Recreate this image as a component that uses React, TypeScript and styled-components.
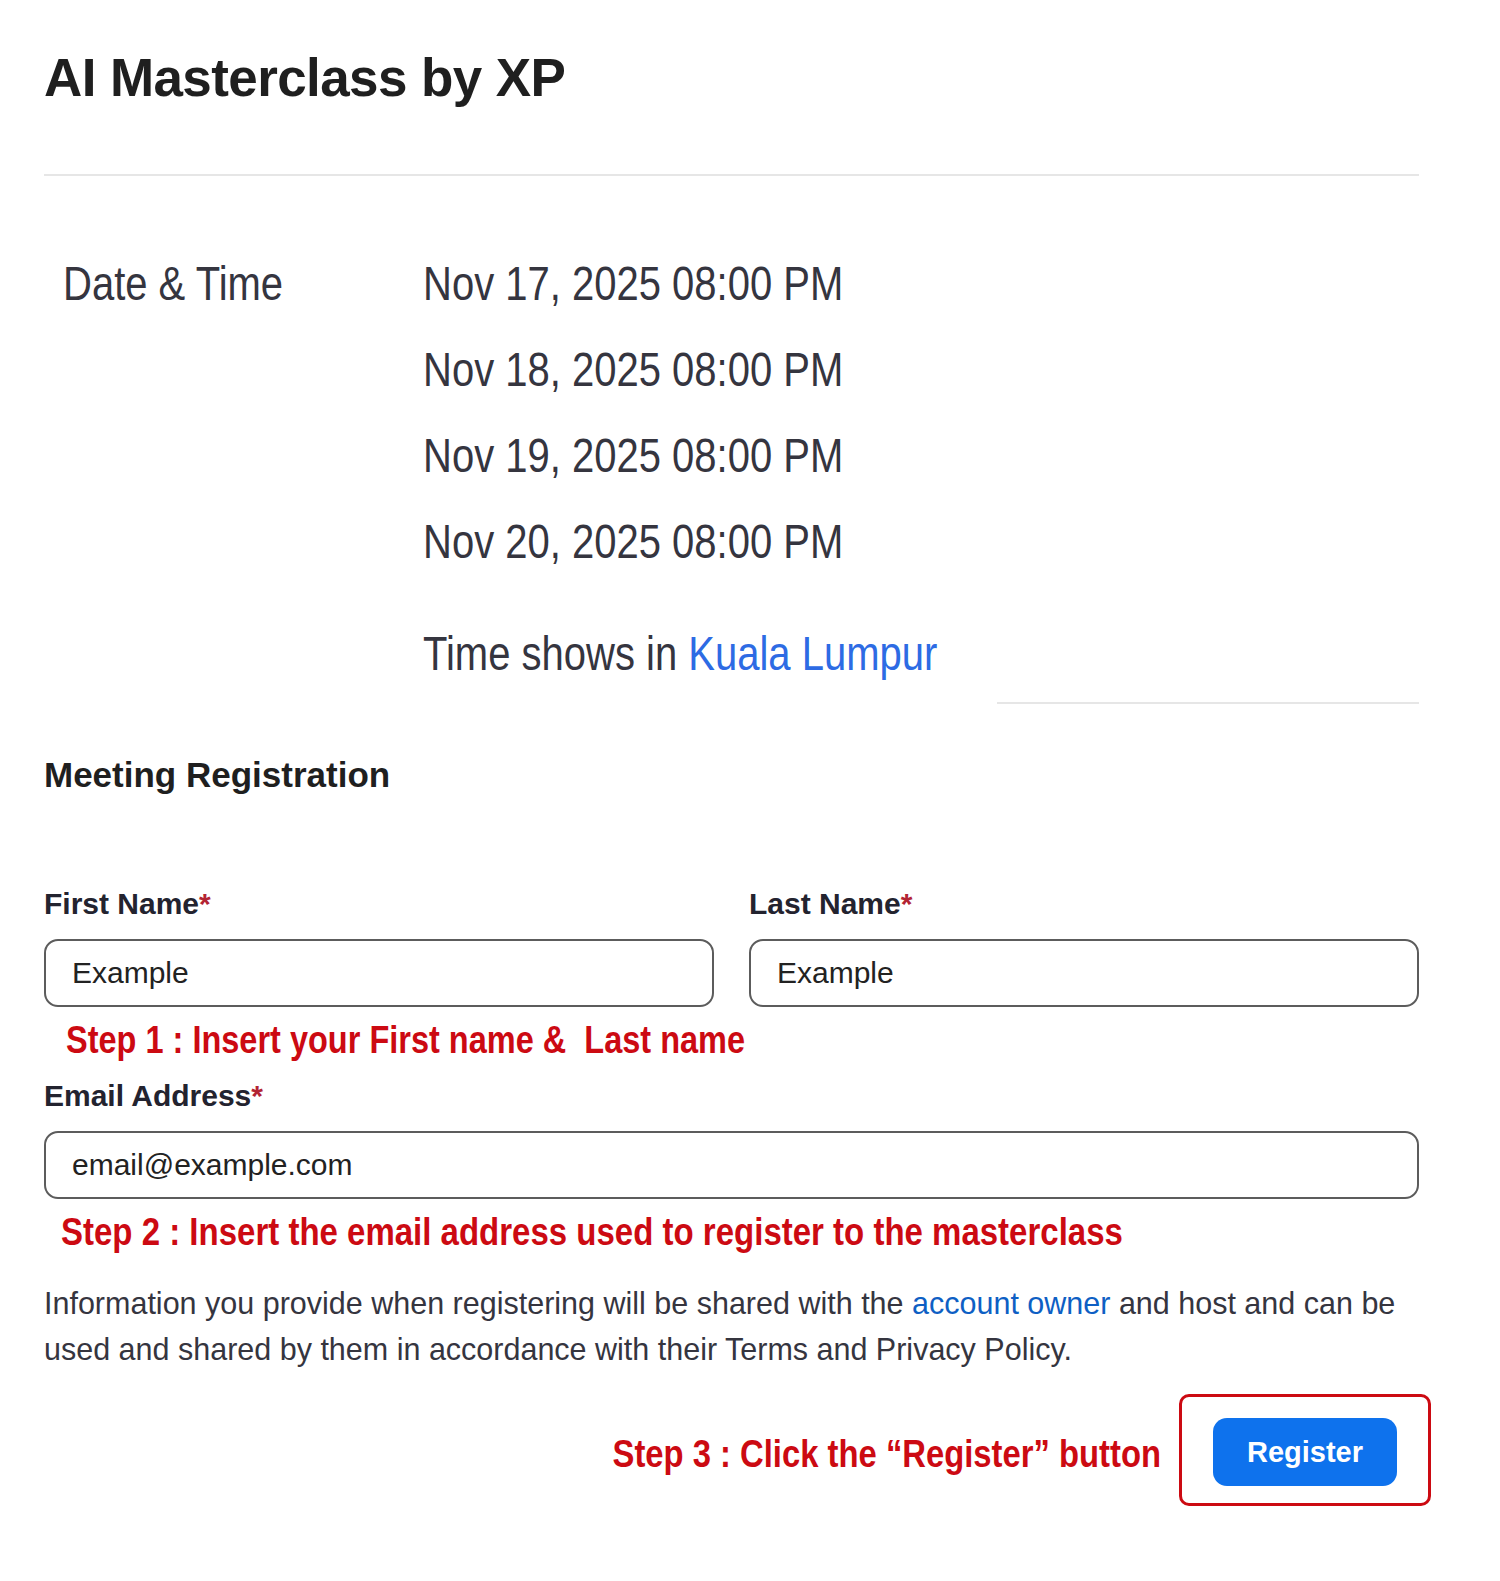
import React from 'react';
import styled, { createGlobalStyle } from 'styled-components';

const palette = {
  text: '#1f1f1f',
  label: '#23232f',
  body: '#35353f',
  line: '#e6e6e6',
  border: '#5c5c5c',
  link: '#2d6be4',
  linkDark: '#0e5fc4',
  step: '#cc0a12',
  required: '#b32433',
  button: '#0e72ed',
};

const GlobalStyle = createGlobalStyle`
  body {
    margin: 0;
    background: #ffffff;
    font-family: 'Liberation Sans', Arial, sans-serif;
  }
`;

const Page = styled.div`
  width: 1375px;
  padding: 47px 0 60px 44px;
`;

const Title = styled.h1`
  margin: 0;
  font-size: 53px;
  line-height: 62px;
  font-weight: 700;
  letter-spacing: -0.6px;
  color: ${palette.text};
`;

const Divider = styled.hr<{ $width?: number }>`
  margin: 0;
  margin-left: ${(p) => (p.$width ? 'auto' : '0')};
  width: ${(p) => (p.$width ? `${p.$width}px` : '100%')};
  border: none;
  border-top: 2px solid ${palette.line};
`;

// the schedule text in the screenshot is tall and narrow
const Schedule = styled.div`
  display: grid;
  grid-template-columns: 360px 1fr;
  align-items: start;
  padding-left: 19px;
  margin-top: 64px;
  font-size: 40px;
  line-height: 86px;
  color: ${palette.body};
`;

const Tall = styled.div`
  transform: scaleY(1.2);
  transform-origin: 0 50%;
`;

const DateList = styled.div`
  display: flex;
  flex-direction: column;
`;

const TimeZone = styled(Tall)`
  margin-top: 26px;
`;

const Link = styled.span<{ $dark?: boolean }>`
  color: ${(p) => (p.$dark ? palette.linkDark : palette.link)};
`;

const SectionTitle = styled.h2`
  margin: 51px 0 0;
  font-size: 35px;
  line-height: 40px;
  font-weight: 700;
  color: ${palette.text};
`;

const NameRow = styled.div`
  display: grid;
  grid-template-columns: 1fr 1fr;
  column-gap: 35px;
  margin-top: 91px;
`;

const Field = styled.div`
  display: flex;
  flex-direction: column;
  gap: 17px;
`;

const Label = styled.label`
  font-size: 30px;
  line-height: 36px;
  font-weight: 700;
  color: ${palette.label};

  span {
    color: ${palette.required};
  }
`;

const Input = styled.input`
  box-sizing: border-box;
  width: 100%;
  height: 68px;
  padding: 0 26px;
  border: 2px solid ${palette.border};
  border-radius: 14px;
  font-family: 'Liberation Sans', Arial, sans-serif;
  font-size: 30px;
  color: #222222;
  background: #ffffff;
  outline: none;
`;

const StepNote = styled.div<{ $indent: number; $top: number; $size?: number }>`
  margin-top: ${(p) => p.$top}px;
  padding-left: ${(p) => p.$indent}px;
  font-size: ${(p) => p.$size ?? 32.5}px;
  line-height: 44px;
  font-weight: 700;
  color: ${palette.step};
  white-space: pre;
  transform: scaleY(1.17);
  transform-origin: 0 50%;
`;

const EmailField = styled(Field)`
  margin-top: 16px;
`;

const Notice = styled.p`
  margin: 26px 0 0;
  font-size: 30.5px;
  line-height: 46px;
  color: ${palette.body};
`;

const ActionRow = styled.div`
  display: flex;
  justify-content: flex-end;
  align-items: center;
  gap: 18px;
  margin-top: 22px;
  margin-right: -12px;
`;

const Highlight = styled.div`
  padding: 21px 31px 17px;
  border: 3px solid ${palette.step};
  border-radius: 10px;
`;

const RegisterButton = styled.button`
  width: 184px;
  height: 68px;
  border: none;
  border-radius: 14px;
  background: ${palette.button};
  color: #ffffff;
  font-family: 'Liberation Sans', Arial, sans-serif;
  font-size: 29px;
  font-weight: 700;
  cursor: pointer;
`;

const dates = [
  'Nov 17, 2025 08:00 PM',
  'Nov 18, 2025 08:00 PM',
  'Nov 19, 2025 08:00 PM',
  'Nov 20, 2025 08:00 PM',
];

export default function App() {
  return (
    <>
      <GlobalStyle />
      <Page>
        <Title>AI Masterclass by XP</Title>
        <Divider style={{ marginTop: 65 }} />

        <Schedule>
          <Tall>Date &amp; Time</Tall>
          <DateList>
            {dates.map((d) => (
              <Tall key={d}>{d}</Tall>
            ))}
            <TimeZone>
              Time shows in <Link>Kuala Lumpur</Link>
            </TimeZone>
          </DateList>
        </Schedule>
        <Divider $width={422} style={{ marginTop: 6 }} />

        <SectionTitle>Meeting Registration</SectionTitle>

        <NameRow>
          <Field>
            <Label>
              First Name<span>*</span>
            </Label>
            <Input defaultValue="Example" />
          </Field>
          <Field>
            <Label>
              Last Name<span>*</span>
            </Label>
            <Input defaultValue="Example" />
          </Field>
        </NameRow>
        <StepNote $indent={22} $top={11}>
          {'Step 1 : Insert your First name &  Last name'}
        </StepNote>

        <EmailField>
          <Label>
            Email Address<span>*</span>
          </Label>
          <Input defaultValue="email@example.com" />
        </EmailField>
        <StepNote $indent={17} $top={11} $size={33}>
          Step 2 : Insert the email address used to register to the masterclass
        </StepNote>

        <Notice>
          Information you provide when registering will be shared with the{' '}
          <Link $dark>account owner</Link> and host and can be used and shared by
          them in accordance with their Terms and Privacy Policy.
        </Notice>

        <ActionRow>
          <StepNote $indent={0} $top={8} $size={32.8}>
            Step 3 : Click the “Register” button
          </StepNote>
          <Highlight>
            <RegisterButton type="button">Register</RegisterButton>
          </Highlight>
        </ActionRow>
      </Page>
    </>
  );
}
